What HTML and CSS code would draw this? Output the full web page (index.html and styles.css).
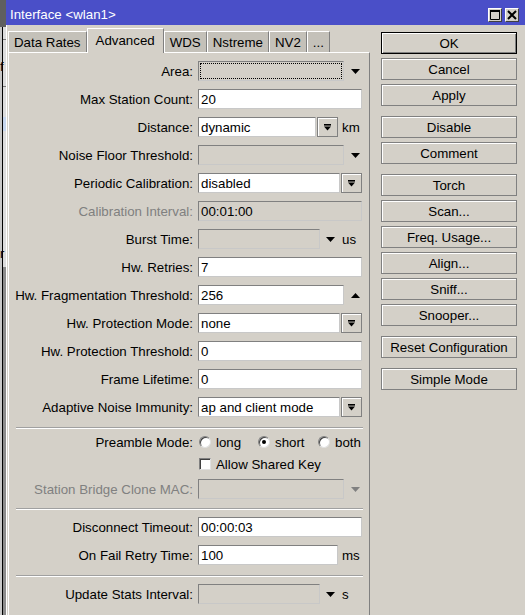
FILE: index.html
```html
<!DOCTYPE html>
<html>
<head>
<meta charset="utf-8">
<title>Interface wlan1</title>
<link rel="stylesheet" href="styles.css">
</head>
<body>
<div class="screen">
  <div class="behind">
    <div class="bh-top"></div>
    <div class="bh-rest">
      <div class="bh-line"></div>
      <div class="bh-f">f</div>
      <div class="bh-line"></div>
      <div class="bh-blue"></div>
      <div class="bh-r">r</div>
      <div class="bh-dark"></div>
    </div>
  </div>
  <div class="window">
    <div class="titlebar">
      <span class="title">Interface &lt;wlan1&gt;</span>
      <div class="tbtns">
        <span class="tbtn"><svg width="10" height="10" viewBox="0 0 10 10"><path d="M0.5 0.5H9.5V9.5H0.5Z" fill="none" stroke="#000" stroke-width="1"/><rect x="0" y="0" width="10" height="2" fill="#000"/></svg></span>
        <span class="tbtn"><svg width="10" height="10" viewBox="0 0 10 10"><path d="M1 1L9 9M9 1L1 9" stroke="#000" stroke-width="2"/></svg></span>
      </div>
    </div>
    <div class="wbody">
      <div class="main">
        <div class="tabs">
          <div class="tab">Data Rates</div>
          <div class="tab active">Advanced</div>
          <div class="tab">WDS</div>
          <div class="tab">Nstreme</div>
          <div class="tab">NV2</div>
          <div class="tab">...</div>
        </div>
        <div class="panel">
          <div class="group g1">
            <div class="row"><span class="lbl">Area:</span><div class="ctl"><div class="fld dis w-arrow focus"><span class="dots"></span></div><span class="arr"><svg width="9" height="5" viewBox="0 0 9 5"><path d="M0 0H9L4.5 5Z"/></svg></span></div></div>
            <div class="row"><span class="lbl">Max Station Count:</span><div class="ctl"><div class="fld w-full">20</div></div></div>
            <div class="row"><span class="lbl">Distance:</span><div class="ctl"><div class="fld w-dist">dynamic</div><span class="cbtn"><svg width="7" height="7" viewBox="0 0 7 7"><rect width="7" height="1.6"/><path d="M0 2.6H7L3.5 6.6Z"/></svg></span><span class="unit">km</span></div></div>
            <div class="row"><span class="lbl">Noise Floor Threshold:</span><div class="ctl"><div class="fld dis w-arrow"></div><span class="arr"><svg width="9" height="5" viewBox="0 0 9 5"><path d="M0 0H9L4.5 5Z"/></svg></span></div></div>
            <div class="row"><span class="lbl">Periodic Calibration:</span><div class="ctl"><div class="fld w-combo">disabled</div><span class="cbtn"><svg width="7" height="7" viewBox="0 0 7 7"><rect width="7" height="1.6"/><path d="M0 2.6H7L3.5 6.6Z"/></svg></span></div></div>
            <div class="row"><span class="lbl off">Calibration Interval:</span><div class="ctl"><div class="fld dis w-full">00:01:00</div></div></div>
            <div class="row"><span class="lbl">Burst Time:</span><div class="ctl"><div class="fld dis w-short"></div><span class="arr arr-n"><svg width="9" height="5" viewBox="0 0 9 5"><path d="M0 0H9L4.5 5Z"/></svg></span><span class="unit u-tight">us</span></div></div>
            <div class="row"><span class="lbl">Hw. Retries:</span><div class="ctl"><div class="fld w-full">7</div></div></div>
            <div class="row"><span class="lbl">Hw. Fragmentation Threshold:</span><div class="ctl"><div class="fld w-arrow">256</div><span class="arr"><svg width="9" height="5" viewBox="0 0 9 5"><path d="M0 5H9L4.5 0Z"/></svg></span></div></div>
            <div class="row"><span class="lbl">Hw. Protection Mode:</span><div class="ctl"><div class="fld w-combo">none</div><span class="cbtn"><svg width="7" height="7" viewBox="0 0 7 7"><rect width="7" height="1.6"/><path d="M0 2.6H7L3.5 6.6Z"/></svg></span></div></div>
            <div class="row"><span class="lbl">Hw. Protection Threshold:</span><div class="ctl"><div class="fld w-full">0</div></div></div>
            <div class="row"><span class="lbl">Frame Lifetime:</span><div class="ctl"><div class="fld w-full">0</div></div></div>
            <div class="row"><span class="lbl">Adaptive Noise Immunity:</span><div class="ctl"><div class="fld w-combo">ap and client mode</div><span class="cbtn"><svg width="7" height="7" viewBox="0 0 7 7"><rect width="7" height="1.6"/><path d="M0 2.6H7L3.5 6.6Z"/></svg></span></div></div>
          </div>
          <div class="sep s1"></div>
          <div class="group g2">
            <div class="row"><span class="lbl lbl-flat">Preamble Mode:</span><div class="ctl radios">
              <span class="opt o1"><span class="radio"></span>long</span>
              <span class="opt o2"><span class="radio on"></span>short</span>
              <span class="opt"><span class="radio"></span>both</span>
            </div></div>
            <div class="row r-check"><span class="lbl"></span><div class="ctl"><span class="check"></span><span class="ctext">Allow Shared Key</span></div></div>
            <div class="row r-mac"><span class="lbl off">Station Bridge Clone MAC:</span><div class="ctl"><div class="fld dis w-arrow"></div><span class="arr off"><svg width="9" height="5" viewBox="0 0 9 5"><path d="M0 0H9L4.5 5Z"/></svg></span></div></div>
          </div>
          <div class="sep s2"></div>
          <div class="group g3">
            <div class="row"><span class="lbl">Disconnect Timeout:</span><div class="ctl"><div class="fld w-full">00:00:03</div></div></div>
            <div class="row"><span class="lbl">On Fail Retry Time:</span><div class="ctl"><div class="fld w-ms">100</div><span class="unit">ms</span></div></div>
          </div>
          <div class="sep s3"></div>
          <div class="group g4">
            <div class="row"><span class="lbl">Update Stats Interval:</span><div class="ctl"><div class="fld dis w-short"></div><span class="arr arr-n"><svg width="9" height="5" viewBox="0 0 9 5"><path d="M0 0H9L4.5 5Z"/></svg></span><span class="unit u-tight">s</span></div></div>
          </div>
        </div>
      </div>
      <div class="side">
        <div class="btn def">OK</div>
        <div class="btn">Cancel</div>
        <div class="btn">Apply</div>
        <div class="btn gap">Disable</div>
        <div class="btn">Comment</div>
        <div class="btn gap">Torch</div>
        <div class="btn">Scan...</div>
        <div class="btn">Freq. Usage...</div>
        <div class="btn">Align...</div>
        <div class="btn">Sniff...</div>
        <div class="btn">Snooper...</div>
        <div class="btn gap">Reset Configuration</div>
        <div class="btn gap">Simple Mode</div>
      </div>
    </div>
  </div>
</div>
</body>
</html>
```

FILE: styles.css
```css
* { box-sizing: border-box; }
html, body { margin: 0; padding: 0; }
body {
  width: 525px;
  height: 615px;
  overflow: hidden;
  background: #d4d0c8;
  font-family: "Liberation Sans", Arial, sans-serif;
  font-size: 13.3px;
  color: #000;
}
.screen { display: flex; height: 615px; }

/* window behind */
.behind { width: 6px; flex: none; display: flex; flex-direction: column; background: #dcdcdc; }
.bh-top { height: 27px; background: #5f5f5f; }
.bh-rest { flex: 1; display: flex; flex-direction: column; border-left: 2px solid #c8c8c8; box-shadow: inset 1px 0 0 #000; padding-left: 1px; }
.bh-line { height: 1px; background: #7a7a7a; margin-top: 12px; }
.bh-f { font-size: 13px; line-height: 14px; margin-top: 20px; margin-left: -3px; overflow: hidden; }
.bh-blue { height: 14px; background: #c6d6ee; margin-top: 30px; }
.bh-r { font-size: 13px; line-height: 14px; margin-top: 116px; margin-left: -3px; overflow: hidden; }
.bh-dark { flex: 1; margin-top: 6px; background: #8c8c8c; }

.window { flex: 1; display: flex; flex-direction: column; }
.titlebar {
  height: 25px;
  flex: none;
  background: #4a4fc8;
  display: flex;
  align-items: center;
  justify-content: space-between;
  padding: 3px 6px 0 4px;
}
.title { color: #fff; }
.tbtns { display: flex; gap: 3px; margin-top: 1px; }
.tbtn {
  width: 14px; height: 14px;
  background: #d4d0c8;
  border: 1px solid;
  border-color: #fff #404040 #404040 #fff;
  display: flex; align-items: center; justify-content: center;
}

.wbody { flex: 1; display: flex; border-left: 1px solid #fff; padding-left: 1px; }
.main { width: 362px; flex: none; display: flex; flex-direction: column; }

.tabs { display: flex; align-items: flex-end; height: 27px; padding-top: 3px; }
.tab {
  height: 21px;
  line-height: 21px;
  padding: 0 5px;
  background: #c4c1b9;
  border-top: 1px solid #fff;
  border-left: 1px solid #fff;
  border-right: 1px solid #808080;
  white-space: nowrap;
}
.tab.active {
  height: 25px;
  line-height: 23px;
  padding: 0 8px;
  margin-bottom: -1px;
  background: #d4d0c8;
  position: relative;
  z-index: 1;
}

.panel {
  flex: 1;
  border-top: 1px solid #fff;
  border-left: 1px solid #fff;
  border-right: 1px solid #808080;
  padding-top: 8px;
}
.group { display: flex; flex-direction: column; gap: 8px; }
.row {
  display: grid;
  grid-template-columns: 184px 1fr;
  column-gap: 5px;
  height: 20px;
  align-items: center;
}
.lbl { text-align: right; white-space: nowrap; padding-top: 1px; }
.lbl.lbl-flat { padding-top: 0; }
.lbl.off { color: #808080; }
.ctl { display: flex; align-items: center; height: 20px; }

.fld {
  height: 20px;
  background: #fff;
  border: 1px solid;
  border-color: #808080 #c8c8c8 #c8c8c8 #808080;
  padding: 0 2px;
  line-height: 19px;
  white-space: nowrap;
  overflow: hidden;
  flex: none;
}
.fld.dis { background: #d4d0c8; }
.fld.focus { padding: 1px; }
.dots { display: block; height: 16px; border: 1px dotted #000; }
.w-full { width: 164px; }
.w-arrow { width: 146px; }
.w-combo { width: 142px; }
.w-dist { width: 118px; }
.w-short { width: 122px; }
.w-ms { width: 140px; }

.arr { width: 22px; display: flex; justify-content: center; align-items: center; }
.arr.arr-n { width: 20px; }
.arr svg { fill: #000; }
.arr.off svg { fill: #808080; }

.cbtn {
  width: 21px; height: 20px;
  margin-left: 1px;
  background: #d4d0c8;
  border: 1px solid #808080;
  box-shadow: inset 1px 1px 0 #fff;
  display: flex; align-items: center; justify-content: center;
  flex: none;
}
.unit { margin-left: 4px; padding-top: 1px; }
.unit.u-tight { margin-left: 2px; }

.sep { height: 2px; border-top: 1px solid #a0a0a0; border-bottom: 1px solid #fff; margin-left: 7px; width: 347px; }
.s1 { margin-top: 10px; }
.g2 { margin-top: 3px; gap: 2px; }
.r-mac { margin-top: 3px; }
.s2 { margin-top: 9px; }
.g3 { margin-top: 7px; }
.s3 { margin-top: 10px; }
.g4 { margin-top: 7px; }

.radios { padding-left: 1px; }
.opt { display: flex; align-items: center; gap: 5px; }
.opt.o1 { width: 59px; }
.opt.o2 { width: 60px; }
.radio {
  width: 12px; height: 12px;
  border-radius: 50%;
  background: #fff;
  border: 1px solid;
  border-color: #808080 #e0e0e0 #e0e0e0 #808080;
  box-shadow: inset 1px 1px 0 #404040;
  display: flex; align-items: center; justify-content: center;
  flex: none;
}
.radio.on::after { content: ""; width: 4px; height: 4px; border-radius: 50%; background: #000; }
.check {
  width: 12px; height: 12px;
  margin-left: 1px;
  background: #fff;
  border: 1px solid;
  border-color: #808080 #e0e0e0 #e0e0e0 #808080;
  box-shadow: inset 1px 1px 0 #404040;
  flex: none;
}
.ctext { margin-left: 5px; }

.side {
  width: 136px;
  margin-left: 11px;
  padding-top: 7px;
  display: flex;
  flex-direction: column;
  gap: 4px;
}
.btn {
  height: 22px;
  background: #d4d0c8;
  border: 1px solid #808080;
  box-shadow: inset 1px 1px 0 #fff;
  text-align: center;
  line-height: 21px;
  white-space: nowrap;
}
.btn.def { border-color: #000; box-shadow: inset 1px 1px 0 #fff, inset -1px -1px 0 #808080; }
.btn.gap { margin-top: 6px; }
```
